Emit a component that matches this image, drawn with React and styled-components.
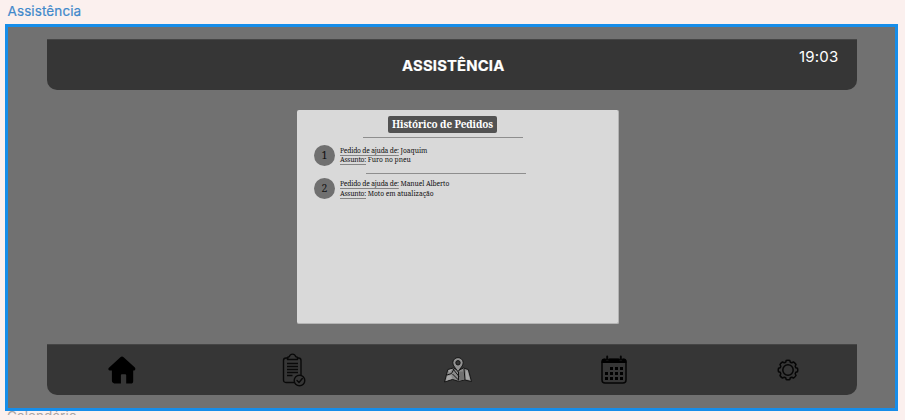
import React from "react";
import styled, { createGlobalStyle } from "styled-components";

const GlobalStyle = createGlobalStyle`
  *, *::before, *::after { box-sizing: border-box; }
  body { margin: 0; background: #fbf0ee; overflow: hidden; }
`;

const Canvas = styled.div`
  width: 905px;
  height: 420px;
  display: flex;
  flex-direction: column;
  background: #fbf0ee;
  font-family: Inter, sans-serif;
`;

const FrameLabel = styled.div`
  height: 24px;
  padding: 2px 0 0 7.5px;
  font-size: 13.5px;
  line-height: 18px;
  letter-spacing: 0.1px;
  color: #3f89cb;
  -webkit-text-stroke: 0.2px #3f89cb;
`;

const NextFrameLabel = styled.div`
  height: 4px;
  padding-left: 7px;
  overflow: hidden;
  font-size: 13.5px;
  line-height: 11px;
  letter-spacing: 0.1px;
  color: #aaa5a4;
`;

const Frame = styled.main`
  width: 893px;
  height: 387px;
  margin-left: 5px;
  padding: 12px 38.5px 0 39px;
  border: 3px solid #168de9;
  background: #717171;
  display: flex;
  flex-direction: column;
`;

const Bar = styled.div`
  width: 809.5px;
  height: 51px;
  flex: none;
  background: #363636;
  border-top: 1px solid #454545;
  border-radius: 0 0 10px 10px;
`;

const Header = styled(Bar).attrs({ as: "header" })`
  display: grid;
  grid-template-columns: 1fr auto 1fr;
  color: #fff;
`;

const Title = styled.h1`
  grid-column: 2;
  margin: 17px 0 0 3px;
  font-size: 14.8px;
  line-height: 18px;
  font-weight: 700;
  letter-spacing: 0.18px;
  -webkit-text-stroke: 0.2px #fff;
`;

const Clock = styled.time`
  justify-self: end;
  margin: 7px 18px 0 0;
  font-size: 15px;
  line-height: 20px;
  letter-spacing: 0.2px;
`;

const Card = styled.section`
  width: 321.5px;
  height: 213.5px;
  margin: 20px 0 20.5px 250px;
  padding-top: 6px;
  flex: none;
  display: flex;
  flex-direction: column;
  border: 1px solid #b4b4b4;
  border-width: 0 1px 1px 0;
  border-radius: 2px;
  background: #d9d9d9;
  color: #111;
  font-family: "Noto Serif", "DejaVu Serif Condensed", "DejaVu Serif", serif;
`;

const Badge = styled.h2`
  width: 109px;
  height: 17px;
  margin: 0 0 0 91px;
  border-radius: 2px;
  background: #525252;
  color: #fff;
  text-align: center;
  white-space: nowrap;
  font-size: 10px;
  line-height: 17px;
  font-weight: 700;
  letter-spacing: -0.14px;
`;

const Rule = styled.hr`
  width: 160px;
  height: 1px;
  flex: none;
  margin: ${(p) => p.$top}px 0 0 ${(p) => p.$left}px;
  border: 0;
  background: #8e8e8e;
`;

const Request = styled.article`
  display: flex;
  align-items: center;
  height: 21px;
  margin: ${(p) => p.$top}px 0 0 17px;
`;

const Index = styled.div`
  width: 21px;
  height: 21px;
  flex: none;
  border-radius: 50%;
  background: #707070;
  text-align: center;
  font-size: 10.5px;
  line-height: 20px;
`;

const Details = styled.div`
  margin-left: 5px;
  font-size: 6.7px;
  line-height: 9.5px;
  white-space: nowrap;
`;

const Line = styled.div`
  height: 9.5px;
  letter-spacing: ${(p) => p.$tracking}px;
`;

const Key = styled.span`
  letter-spacing: -0.18px;
  text-decoration: underline;
  text-decoration-color: #858585;
  text-decoration-thickness: 1px;
  text-underline-offset: 1.5px;
  text-decoration-skip-ink: none;
`;

const Nav = styled(Bar).attrs({ as: "nav" })`
  display: grid;
  grid-template-columns: 150px 193px 136px 176px 171px;
  align-items: center;
  justify-items: center;
`;

const Icon = styled.svg`
  display: block;
  overflow: visible;
`;

const HomeIcon = () => (
  <Icon width="28" height="28" viewBox="0 0 28 28">
    <path d="M12.4 1.2q1.6-1.2 3.2 0l11 10.1c1.5 1.5.5 3.2-.6 3.2h-.8v10.4q0 2.6-2.5 2.6h-4.5v-8.2q0-1-1-1h-3.3q-1 0-1 1v8.2H8.1q-4.2 0-4.2-2.8V14.500H2.2c-1.7 0-2.6-1.7-1-3.1z" />
  </Icon>
);

const ClipboardIcon = () => (
  <Icon width="24" height="34" viewBox="0 0 24 34" fill="none" stroke="#090909" strokeWidth="1.4" strokeLinecap="round" strokeLinejoin="round">
    <path d="M12 29.5H4q-2.500 0-2.500-2.500V7.500Q1.500 5 4 5h2m10 0h.5Q19 5 19 7.500V22" />
    <path d="M5.500 6.500V4.800q0-1 1.700-1C8.500.2 12.500.2 13.800 3.800q1.700 0 1.700 1v1.700z" />
    <path d="M5 10.500h11M5 13.500h11M5 16.500h11M5 19.500h11M5 22.500h5.500" strokeLinecap="butt" />
    <circle cx="17.500" cy="27.500" r="5.300" />
    <path d="M15 27.500l2 2 3.300-4" />
  </Icon>
);

const MapIcon = () => (
  <Icon width="28" height="26" viewBox="0 0 28 26" stroke="#151515" strokeWidth="1" strokeLinejoin="round">
    <path d="M3.800 12.500l5.500-1.500 5 2.500 5-2.500 5 1.500 3.200 12-7-1.500-6 1.300-6-1.800-8 2.500z" fill="#8a8a8a" />
    <path d="M14.500 14.500h5l1 8-5.500 1.300z" fill="#707070" stroke="none" />
    <path d="M9 12l6 7.500M8.500 17l6 6M3 18l4.500-1.500L10 12M20 12l1 11M14.500 15v8.500" fill="none" />
    <path d="M4.500 13.300l3.500-1-2.500 3.500zM3.300 19l4-1 .7 3.800-6 2z M22 13.500l1.500.5 2.500 9-4-1z" fill="#a6a6a6" stroke="none" />
    <path d="M14 14.800C11.500 10.800 8.800 8.800 8.800 5.800a5.200 5.200 0 0 1 10.400 0c0 3-2.700 5-5.200 9z" fill="#929292" />
    <circle cx="14" cy="5.800" r="2.200" fill="#363636" />
  </Icon>
);

const CalendarIcon = () => (
  <Icon width="26" height="30" viewBox="0 0 26 30">
    <rect x="1" y="4.500" width="24" height="23.500" rx="3" fill="none" stroke="#050505" strokeWidth="1.500" />
    <path d="M.5 8V6q0-2.500 2.500-2.500h1.300C4.500 6.500 8 6.500 8.200 3.500h9.600c.2 3 3.700 3 3.900 0H23q2.500 0 2.500 2.500v2z" />
    <path d="M6.200 1.500v3M19.800 1.500v3" stroke="#050505" strokeWidth="1.900" strokeLinecap="round" />
    <path d="M9 12h3v3H9zM14 12h3v3H14zM19 12H22v3h-3zM4 17h3v3H4zM9 17h3v3H9zM14 17h3v3H14zM19 17H22v3h-3zM4 22h3v3H4zM9 22h3v3H9zM14 22h3v3H14zM19 22H22v3h-3z" />
  </Icon>
);

const GearIcon = () => (
  <Icon width="22" height="22" viewBox="0 0 22 22" fill="none" stroke="#060606" strokeWidth="1.500" strokeLinejoin="round">
    <path d="M9.200 1.500q1.800-.6 3.600 0l.5 1.700 1.500.6 1.700-.8q1.500.8 2.500 2.500l-.8 1.700.6 1.500 1.700.5q.6 1.800 0 3.600l-1.700.5-.6 1.500.8 1.700q-.8 1.500-2.500 2.500l-1.700-.8-1.500.6-.5 1.700q-1.800.6-3.600 0l-.5-1.700-1.500-.6-1.700.8q-1.500-.8-2.500-2.500l.8-1.700-.6-1.500-1.700-.5q-.6-1.800 0-3.600l1.700-.5.6-1.500L3 5.500q.8-1.500 2.500-2.500l1.700.8 1.500-.6z" />
    <circle cx="11" cy="11" r="5.200" />
  </Icon>
);

const requests = [
  { name: "Joaquim", subject: "Furo no pneu", rule: [4, 65.5], top: 6.5, tracking: [0, 0] },
  { name: "Manuel Alberto", subject: "Moto em atualização", rule: [7, 69], top: 4.5, tracking: [-0.08, -0.02] },
];

export default function App() {
  return (
    <>
      <GlobalStyle />
      <Canvas>
        <FrameLabel>Assistência</FrameLabel>
        <Frame>
          <Header>
            <Title>ASSISTÊNCIA</Title>
            <Clock>19:03</Clock>
          </Header>
          <Card>
            <Badge>Histórico de Pedidos</Badge>
            {requests.map((r, i) => (
              <React.Fragment key={r.name}>
                <Rule $top={r.rule[0]} $left={r.rule[1]} />
                <Request $top={r.top}>
                  <Index>{i + 1}</Index>
                  <Details>
                    <Line $tracking={r.tracking[0]}><Key>Pedido de ajuda de:</Key> {r.name}</Line>
                    <Line $tracking={r.tracking[1]}><Key>Assunto:</Key> {r.subject}</Line>
                  </Details>
                </Request>
              </React.Fragment>
            ))}
          </Card>
          <Nav>
            <HomeIcon />
            <ClipboardIcon />
            <MapIcon />
            <CalendarIcon />
            <GearIcon />
          </Nav>
        </Frame>
        <NextFrameLabel>Calendário</NextFrameLabel>
      </Canvas>
    </>
  );
}
